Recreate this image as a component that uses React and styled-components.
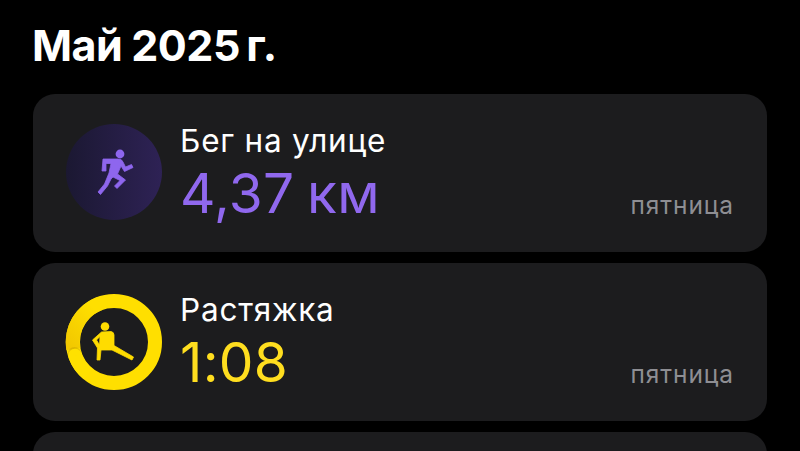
import React from "react";
import styled, { createGlobalStyle } from "styled-components";

const Global = createGlobalStyle`
  html, body { margin: 0; padding: 0; background: #000; height: 451px; overflow: hidden; }
  * { box-sizing: border-box; }
`;

const Page = styled.div`
  width: 800px;
  height: 451px;
  overflow: hidden;
  background: #000;
  padding: 0 33px;
  font-family: Inter, "Liberation Sans", sans-serif;
`;

const Title = styled.h1`
  margin: 0 0 0 -1px;
  height: 94px;
  padding-top: 22px;
  font-size: 43px;
  line-height: 46px;
  font-weight: 700;
  letter-spacing: -0.45px;
  word-spacing: -1px;
  color: #fff;
  white-space: nowrap;
`;

const List = styled.div`
  display: flex;
  flex-direction: column;
  gap: 11px;
`;

const Card = styled.div`
  flex: none;
  height: 158px;
  border-radius: 22px;
  background: #1c1c1e;
  display: flex;
  align-items: flex-start;
  padding: 30px 33px 0;
  position: relative;
`;

const Badge = styled.svg`
  flex: none;
  width: 96px;
  height: 96px;
  display: block;
  overflow: visible;
`;

const Info = styled.div`
  margin-left: 18px;
  display: flex;
  flex-direction: column;
`;

const Name = styled.div`
  font-size: 31.5px;
  line-height: 34px;
  letter-spacing: 0.8px;
  color: #fff;
  font-weight: 400;
`;

const Value = styled.div`
  font-size: 55px;
  line-height: 60px;
  margin-top: 5px;
  font-weight: 440;
  word-spacing: -3px;
  letter-spacing: 0.3px;
  color: ${(p) => p.$color};
`;

const Day = styled.div`
  position: absolute;
  right: 33px;
  bottom: 34px;
  font-size: 24.5px;
  line-height: 26px;
  letter-spacing: 0.9px;
  color: #8e8e93;
`;

const RunBadge = () => (
  <Badge viewBox="0 0 96 96">
    <defs>
      <linearGradient id="runbg" x1="0" y1="0" x2="1" y2="0">
        <stop offset="0" stopColor="#1b1832" />
        <stop offset="1" stopColor="#2e2255" />
      </linearGradient>
    </defs>
    <circle cx="48" cy="48" r="48" fill="url(#runbg)" />
    <circle cx="54" cy="30" r="4.4" fill="#8e66ee" />
    <path
      d="M37 35 L52 35 Q56 35 57 38 L59.5 43 L65.5 40.5 L67 43.5 L58.5 47.5 L55 42 L51.5 50 L59.5 56 L51 64.5 L48.5 62 L54 56.5 L47 53 L45 55 L41.5 62 L34.5 70.5 L32 68 L38.5 60 L43 49 L45 39.5 L40 39.5 L40 47 L36 47 Z"
      fill="#8e66ee"
      stroke="#8e66ee"
      strokeWidth="0.8"
      strokeLinejoin="round"
    />
  </Badge>
);

const StretchBadge = () => (
  <Badge viewBox="0 0 96 96">
    <defs>
      <linearGradient id="ringshade" x1="0" y1="1" x2="0.6" y2="0">
        <stop offset="0" stopColor="#f2c800" />
        <stop offset="1" stopColor="#ffdf00" />
      </linearGradient>
    </defs>
    <circle cx="48" cy="49" r="41" fill="none" stroke="#ffdf00" strokeWidth="14" />
    <path d="M7.2 56 A41 41 0 0 1 34 10.5" fill="none" stroke="url(#ringshade)" strokeWidth="14" />
    <circle cx="8.5" cy="60.5" r="6.6" fill="#b89400" opacity="0.35" />
    <circle cx="9" cy="62.5" r="6.8" fill="#ffe100" />
    <path d="M9 62.5 A41 41 0 0 0 22 81" fill="none" stroke="#ffe100" strokeWidth="13.6" />
    <circle cx="39" cy="33.5" r="4.3" fill="#ffdc00" />
    <path
      fillRule="evenodd"
      d="M35.5 39 L45 38.5 Q48 39 48 42 L48 52.5 L67.5 64 L66 67 L46 57 L35 57 L34 67 L31 67 L31.5 55 L26.5 47 Z M34 43.5 L30.5 47 L33.5 52 Z"
      fill="#ffdc00"
      stroke="#ffdc00"
      strokeWidth="0.8"
      strokeLinejoin="round"
    />
  </Badge>
);

export default function App() {
  return (
    <Page>
      <Global />
      <Title>Май 2025{"\u2009"}г.</Title>
      <List>
        <Card>
          <RunBadge />
          <Info>
            <Name>Бег на улице</Name>
            <Value $color="#9068ee">4,37 км</Value>
          </Info>
          <Day>пятница</Day>
        </Card>
        <Card>
          <StretchBadge />
          <Info>
            <Name>Растяжка</Name>
            <Value $color="#ffde1f">1:08</Value>
          </Info>
          <Day>пятница</Day>
        </Card>
        <Card />
      </List>
    </Page>
  );
}
